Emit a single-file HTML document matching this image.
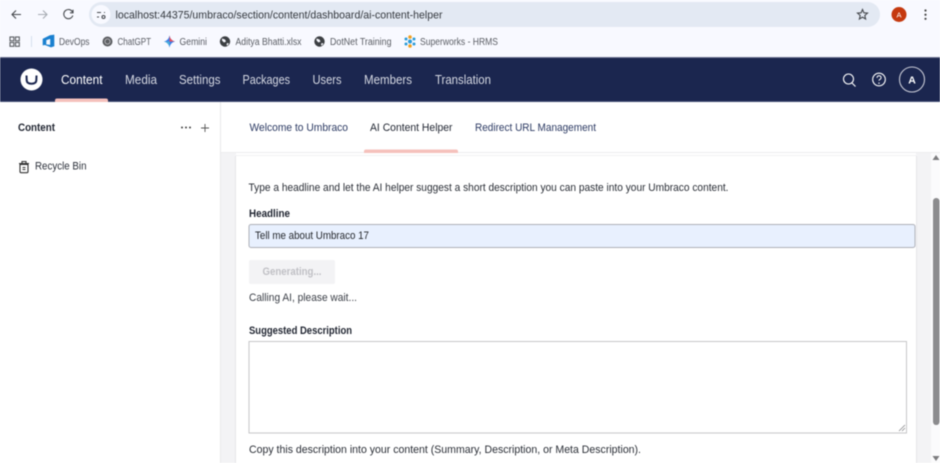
<!DOCTYPE html>
<html><head><meta charset="utf-8"><title>AI Content Helper</title>
<style>
html,body{margin:0;padding:0;width:940px;height:463px;overflow:hidden;background:#fff}
svg{display:block;filter:blur(.45px)}
text{font-family:"Liberation Sans",sans-serif}
</style></head><body>
<svg width="940" height="463" viewBox="0 0 940 463" xmlns="http://www.w3.org/2000/svg">
<rect width="940" height="463" fill="#fff"/>
<!-- browser chrome -->
<rect width="940" height="57" fill="#f8f9ff"/>
<rect x="89" y="2" width="791" height="25" rx="12.5" fill="#e3e9f3"/>
<circle cx="101" cy="14.500" r="9.500" fill="#f8f9ff"/>
<g fill="none" stroke="#45484d" stroke-width="1.100">
<path d="M21 14.500H12M16 10.500l-4 4 4 4"/>
<path d="M38 14.500h9M43 10.500l4 4-4 4" stroke="#a6abb2"/>
<path d="M72.500 12a4.600 4.600 0 1 0 .3 3.500M73 9.800v3h-3"/>
<path d="M97 12.500h4M97 17h2M104 12.500h1"/>
<circle cx="103.500" cy="17" r="1.500"/>
<path d="M862.500 9.500l1.400 3.300 3.600.3-2.700 2.400.8 3.500-3.100-1.900-3.100 1.900.8-3.500-2.700-2.400 3.600-.3z"/>
</g>
<circle cx="899" cy="14.500" r="7.500" fill="#c5390f"/>
<text x="899" y="17.500" font-size="7.500" fill="#fff" text-anchor="middle">A</text>
<g fill="#444"><circle cx="925.500" cy="10.500" r="1.100"/><circle cx="925.500" cy="14.700" r="1.100"/><circle cx="925.500" cy="18.800" r="1.100"/></g>
<text x="115.500" y="18.500" font-size="11" fill="#35393f" textLength="327" lengthAdjust="spacingAndGlyphs">localhost:44375/umbraco/section/content/dashboard/ai-content-helper</text>
<!-- bookmarks -->
<g fill="none" stroke="#5c5f64" stroke-width="1.100">
<rect x="10" y="37" width="3.800" height="3.800"/><rect x="15.500" y="37" width="3.800" height="3.800"/><rect x="10" y="42.500" width="3.800" height="3.800"/><rect x="15.500" y="42.500" width="3.800" height="3.800"/>
</g>
<rect x="31" y="36" width="1" height="11" fill="#d5dfee"/>
<path d="M43 39l7-3.500 4-.5v11l-3 1-6.500-2.500 6 .7V38.500l-4.500 1.500v4.500l-3 .5z" fill="#1a80d0" stroke="#1a80d0" stroke-width=".6"/>
<text x="59" y="45" font-size="10" fill="#5a5d64" textLength="30.500" lengthAdjust="spacingAndGlyphs">DevOps</text>
<circle cx="107.500" cy="41.500" r="5" fill="#5c5e62"/>
<circle cx="107.500" cy="41.500" r="2.600" fill="none" stroke="#c5c5c9" stroke-width=".8"/>
<text x="117.500" y="45" font-size="10" fill="#5a5d64" textLength="33.500" lengthAdjust="spacingAndGlyphs">ChatGPT</text>
<path d="M169.500 35.500q1 5 5.500 6-4.500 1-5.500 6-1-5-5.500-6 4.500-1 5.500-6z" fill="#3f7de8"/>
<path d="M169.500 35.500q1 5 5.500 6h-5.500z" fill="#e8505b"/>
<path d="M164 41.500q4.500 1 5.500 6v-6z" fill="#49b0d8"/>
<text x="179.500" y="45" font-size="10" fill="#5a5d64" textLength="27.500" lengthAdjust="spacingAndGlyphs">Gemini</text>
<circle cx="225" cy="41.500" r="5.200" fill="#3c3f43"/><path d="M222 38.500l3 1 1 2-2 1-2-2zM227 43l2 .5-1.500 2-1-.5z" fill="#f8f9ff"/>
<text x="235.500" y="45" font-size="10" fill="#5a5d64" textLength="66" lengthAdjust="spacingAndGlyphs">Aditya Bhatti.xlsx</text>
<circle cx="319.500" cy="41.500" r="5.200" fill="#3c3f43"/><path d="M316.500 38.500l3 1 1 2-2 1-2-2zM321.500 43l2 .5-1.500 2-1-.5z" fill="#f8f9ff"/>
<text x="330" y="45" font-size="10" fill="#5a5d64" textLength="61.500" lengthAdjust="spacingAndGlyphs">DotNet Training</text>
<g fill="#2b9bd8"><circle cx="410" cy="37" r="1.800" fill="#f0a020"/><circle cx="410" cy="46" r="1.800" fill="#f0a020"/><circle cx="406" cy="39" r="1.500"/><circle cx="414" cy="39" r="1.500"/><circle cx="406" cy="44" r="1.500"/><circle cx="414" cy="44" r="1.500"/><circle cx="410" cy="41.500" r="2"/></g>
<text x="420" y="45" font-size="10" fill="#5a5d64" textLength="78" lengthAdjust="spacingAndGlyphs">Superworks - HRMS</text>
<!-- top nav -->
<rect y="57" width="940" height="45" fill="#1b264f"/>
<rect y="57" width="940" height="1" fill="#6d7391"/>
<rect y="101" width="940" height="1" fill="#454f75"/>
<path d="M55 102v-1.500q0-2 2-2h49q2 0 2 2v1.500z" fill="#f5c1bc"/>
<circle cx="31.500" cy="79.500" r="11" fill="#fff"/>
<path d="M26.500 75.500l.2 5q.3 3.200 4.800 3.200t4.800-3.200l.2-5" fill="none" stroke="#1b264f" stroke-width="2"/>
<g font-size="13">
<text x="61" y="84" fill="#fff" textLength="41.500" lengthAdjust="spacingAndGlyphs">Content</text>
<text x="125" y="84" fill="#d5d8e2" textLength="32" lengthAdjust="spacingAndGlyphs">Media</text>
<text x="179" y="84" fill="#d5d8e2" textLength="41.500" lengthAdjust="spacingAndGlyphs">Settings</text>
<text x="242.500" y="84" fill="#d5d8e2" textLength="47.500" lengthAdjust="spacingAndGlyphs">Packages</text>
<text x="312.500" y="84" fill="#d5d8e2" textLength="29" lengthAdjust="spacingAndGlyphs">Users</text>
<text x="364" y="84" fill="#d5d8e2" textLength="48" lengthAdjust="spacingAndGlyphs">Members</text>
<text x="435" y="84" fill="#d5d8e2" textLength="56" lengthAdjust="spacingAndGlyphs">Translation</text>
</g>
<g fill="none" stroke="#fff" stroke-width="1.100">
<circle cx="848.500" cy="79" r="5"/><path d="M852 83l3.500 3.500"/>
<circle cx="879" cy="79.500" r="6.300"/>
<path d="M877 77.800q.2-2 2.100-2t2 1.800q0 1.100-1.100 1.700t-1 1.400" stroke-width="1"/>
<circle cx="912" cy="79.500" r="12.500" stroke="#c8cad6"/>
</g>
<circle cx="879" cy="83.200" r=".7" fill="#fff"/>
<text x="912" y="83.500" font-size="10.500" font-weight="bold" fill="#fff" text-anchor="middle">A</text>
<!-- sidebar -->
<rect x="220" y="102" width="1" height="361" fill="#e9e9eb"/>
<text x="18" y="131" font-size="11" font-weight="bold" fill="#1f2430" textLength="37" lengthAdjust="spacingAndGlyphs">Content</text>
<g fill="#444"><circle cx="182" cy="127.500" r="1"/><circle cx="186" cy="127.500" r="1"/><circle cx="190" cy="127.500" r="1"/></g>
<path d="M205 124v8M201 128h8" stroke="#555" stroke-width=".9" fill="none"/>
<g fill="none" stroke="#333" stroke-width="1.100">
<path d="M20 164.500h8v7q0 1.200-1.200 1.200h-5.600q-1.200 0-1.200-1.200zM19 163.500h10M22 163v-1.500h4v1.500"/>
<path d="M22.500 167.500h3M22.500 169.500h3" stroke-width="1"/>
</g>
<text x="35" y="169.500" font-size="11" fill="#2b303a" textLength="51.500" lengthAdjust="spacingAndGlyphs">Recycle Bin</text>
<!-- tabs -->
<rect x="221" y="152" width="719" height="1" fill="#ececee"/>
<g font-size="11">
<text x="249.500" y="131" fill="#2c3a63" textLength="98.500" lengthAdjust="spacingAndGlyphs">Welcome to Umbraco</text>
<text x="370" y="131" fill="#1f2430" textLength="82.500" lengthAdjust="spacingAndGlyphs">AI Content Helper</text>
<text x="475" y="131" fill="#2c3a63" textLength="121" lengthAdjust="spacingAndGlyphs">Redirect URL Management</text>
</g>
<path d="M364 153v-1.500q0-2 2-2h90q2 0 2 2v1.500z" fill="#f5c1bc"/>
<!-- main -->
<rect x="221" y="153" width="719" height="310" fill="#f3f3f5"/>
<rect x="236" y="156" width="680" height="307" fill="#fff"/>
<rect x="235" y="156" width="1" height="307" fill="#e6e6e9"/>
<rect x="916" y="156" width="1" height="307" fill="#e6e6e9"/>
<rect x="236" y="153" width="680" height="3" fill="#fff"/>
<rect x="236" y="155" width="680" height="1" fill="#f1f1f3"/>
<!-- scrollbar -->
<rect x="931" y="153" width="9" height="310" fill="#fbfbfc"/>
<path d="M936 155l3.500 5h-7z" fill="#7d7d7f"/>
<rect x="933" y="198" width="6.500" height="227" rx="3.200" fill="#8c8c8e"/>
<path d="M936 461l-3.500-5h7z" fill="#7d7d7f"/>
<!-- content -->
<text x="248.500" y="191" font-size="11" fill="#2a2e36" textLength="480" lengthAdjust="spacingAndGlyphs">Type a headline and let the AI helper suggest a short description you can paste into your Umbraco content.</text>
<text x="249" y="217" font-size="11" font-weight="bold" fill="#1f2430" textLength="41" lengthAdjust="spacingAndGlyphs">Headline</text>
<rect x="249" y="224.500" width="666" height="23" rx="2" fill="#e8f0fe" stroke="#aeb0b8"/>
<text x="255" y="239" font-size="11" fill="#24272c" textLength="114" lengthAdjust="spacingAndGlyphs">Tell me about Umbraco 17</text>
<rect x="249" y="260" width="86" height="24" rx="2" fill="#f3f3f5"/>
<text x="262.500" y="275" font-size="11" font-weight="bold" fill="#c0c0c5" textLength="59" lengthAdjust="spacingAndGlyphs">Generating...</text>
<text x="249" y="301" font-size="11" fill="#3a3e46" textLength="108" lengthAdjust="spacingAndGlyphs">Calling AI, please wait...</text>
<text x="249" y="334" font-size="11" font-weight="bold" fill="#1f2430" textLength="103" lengthAdjust="spacingAndGlyphs">Suggested Description</text>
<rect x="249" y="341.500" width="657.500" height="91.500" fill="#fff" stroke="#c6c6c8"/>
<path d="M899 431l6-6M902 431l3-3" stroke="#8a8a8c" stroke-width=".8" fill="none"/>
<text x="249" y="453" font-size="11" fill="#2a2e36" textLength="392" lengthAdjust="spacingAndGlyphs">Copy this description into your content (Summary, Description, or Meta Description).</text>
</svg>
</body></html>
